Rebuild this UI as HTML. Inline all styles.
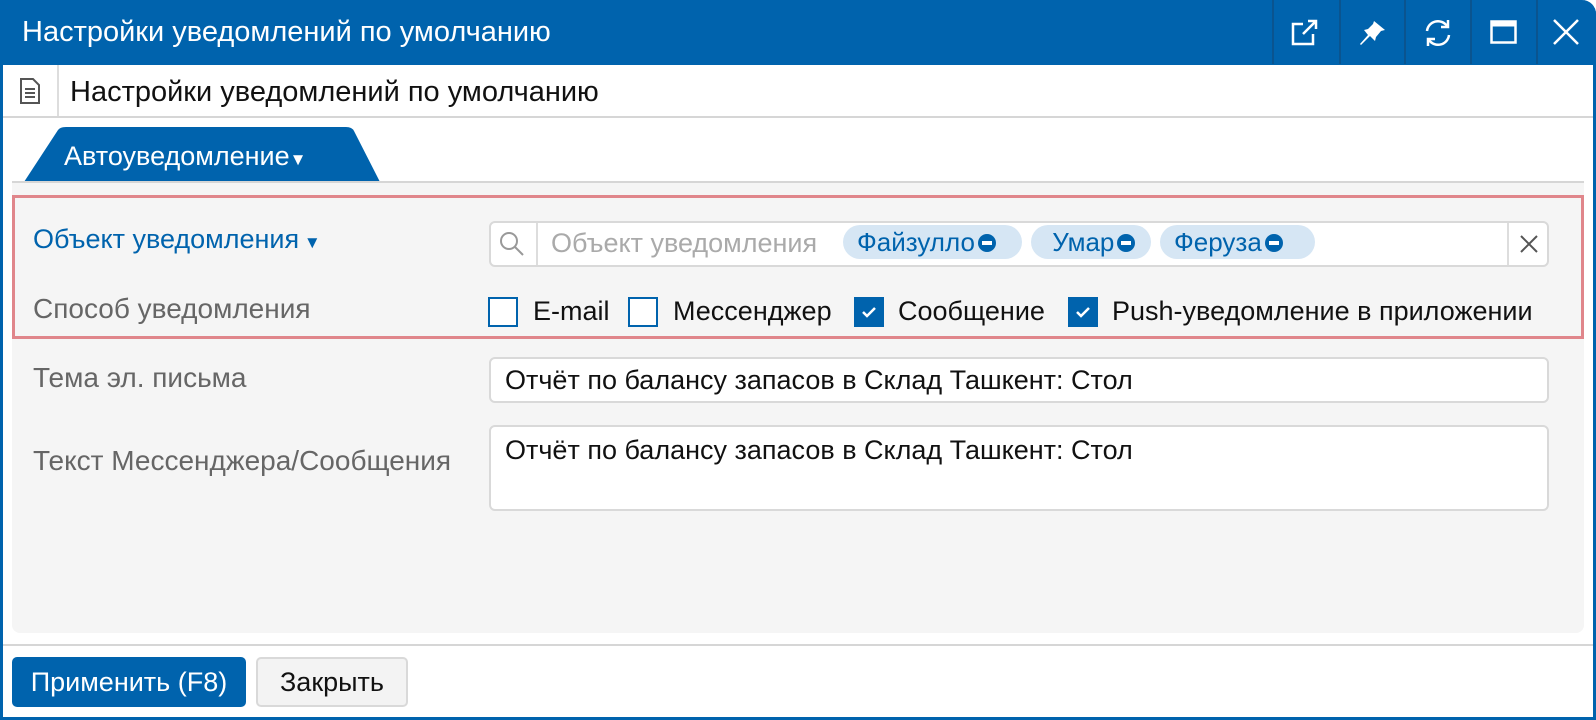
<!DOCTYPE html>
<html><head><meta charset="utf-8"><style>
*{box-sizing:border-box;margin:0;padding:0}
body{width:1596px;height:720px;overflow:hidden;background:#fff;font-family:"Liberation Sans","DejaVu Sans",sans-serif;position:relative}
.a{position:absolute;white-space:nowrap}
.win{left:0;top:0;width:1596px;height:720px;border:3px solid #0063ad;border-top:none;border-radius:0 14px 0 0;background:#fff}
.title{left:0;top:0;width:1596px;height:65px;background:#0063ad;border-radius:0 14px 0 0;color:#fff;font-size:29px;line-height:65px;padding-left:22px}
.sep{top:0;width:2px;height:64px;background:#0a548f}
.lbl{font-size:28px;color:#666}
.inp{background:#fff;border:2px solid #d9d9d9;border-radius:6px;font-size:27px;color:#111}
.cb{width:30px;height:30px;border:2px solid #0063ad;background:#fff}
.cb.on{background:#0063ad}
.ct{font-size:27px;color:#111}
.chip{height:34px;top:225px;background:#d6e6f4;border-radius:17px;color:#0063ad;font-size:26px;line-height:34px;padding-left:14px}
.min{display:inline-block;width:18px;height:18px;border-radius:50%;background:#0063ad;vertical-align:-1px;position:relative;margin-left:3px}
.min:after{content:"";position:absolute;left:4px;top:7px;width:10px;height:4px;background:#fff}
</style></head><body>
<div class="a win"></div>
<div class="a title">Настройки уведомлений по умолчанию</div>
<div class="a sep" style="left:1272px"></div><div class="a sep" style="left:1339px"></div><div class="a sep" style="left:1404px"></div><div class="a sep" style="left:1470px"></div><div class="a sep" style="left:1536px"></div>
<svg class="a" style="left:1290px;top:19px" width="34" height="28" viewBox="0 0 34 28" fill="none" stroke="#fff" stroke-width="2.5"><path d="M13 5H3V25H23V15"/><path d="M13 15L26 2M18 2H26V10"/></svg>
<svg class="a" style="left:1358px;top:19px" width="30" height="28" viewBox="0 0 30 28" fill="#fff"><path d="M16 2L27 11L23 12L18 18L17 22L12 17L3 26L2 25L10 16L6 11L10 10L15 5Z"/></svg>
<svg class="a" style="left:1422px;top:18px" width="32" height="30" viewBox="0 0 32 30" fill="none" stroke="#fff" stroke-width="2.5"><path d="M5 13A11 11 0 0 1 25 8"/><path d="M27 17A11 11 0 0 1 7 22"/><path d="M26 2V9H19" /><path d="M6 28V21H13"/></svg>
<svg class="a" style="left:1490px;top:20px" width="28" height="24" viewBox="0 0 28 24" fill="none" stroke="#fff" stroke-width="2.5"><rect x="1.5" y="1.5" width="24" height="21"/><path d="M1.5 4H25.5" stroke-width="5"/></svg>
<svg class="a" style="left:1553px;top:19px" width="26" height="26" viewBox="0 0 26 26" stroke="#fff" stroke-width="2.5"><path d="M1 1L25 25M25 1L1 25"/></svg>
<svg class="a" style="left:19px;top:78px" width="22" height="26" viewBox="0 0 22 26" fill="none" stroke="#555" stroke-width="2"><path d="M2 1H14L20 7V25H2Z"/><path d="M6 11H16M6 15H16M6 19H16"/></svg>
<div class="a" style="left:57px;top:65px;width:2px;height:52px;background:#ddd"></div>
<div class="a" style="left:70px;top:65px;font-size:29px;line-height:54px;color:#111">Настройки уведомлений по умолчанию</div>
<div class="a" style="left:3px;top:116px;width:1590px;height:2px;background:#d6d6d6"></div>
<svg class="a" style="left:22px;top:127px" width="362" height="56" viewBox="0 0 362 56"><path d="M2 55L36 3Q38 0 44 0H324Q330 0 332 4L358 55Z" fill="#0063ad"/></svg>
<div class="a" style="left:64px;top:129px;line-height:54px;color:#fff;font-size:27px">Автоуведомление<span style="font-size:17px">▼</span></div>
<div class="a" style="left:12px;top:181px;width:1572px;height:2px;background:#d6d6d6"></div>
<div class="a" style="left:12px;top:183px;width:1572px;height:450px;background:#f5f5f5;border-radius:0 0 8px 8px"></div>
<div class="a" style="left:12px;top:195px;width:1572px;height:144px;border:3px solid #e0868b"></div>
<div class="a" style="left:33px;top:224px;font-size:27px;color:#0063ad">Объект уведомления<span style="font-size:17px"> ▼</span></div>
<div class="a lbl" style="left:33px;top:293px">Способ уведомления</div>
<div class="a lbl" style="left:33px;top:362px">Тема эл. письма</div>
<div class="a lbl" style="left:33px;top:445px">Текст Мессенджера/Сообщения</div>
<div class="a inp" style="left:489px;top:221px;width:1060px;height:46px"></div>
<div class="a" style="left:536px;top:223px;width:2px;height:42px;background:#ddd"></div>
<div class="a" style="left:1507px;top:223px;width:2px;height:42px;background:#ddd"></div>
<svg class="a" style="left:499px;top:231px" width="26" height="26" viewBox="0 0 26 26" fill="none" stroke="#999" stroke-width="2"><circle cx="10" cy="10" r="8"/><path d="M16 16L24 24"/></svg>
<svg class="a" style="left:1520px;top:235px" width="18" height="18" viewBox="0 0 18 18" stroke="#555" stroke-width="2"><path d="M1 1L17 17M17 1L1 17"/></svg>
<div class="a" style="left:551px;top:226px;font-size:27px;line-height:34px;color:#aaa">Объект уведомления</div>
<div class="a chip" style="left:843px;width:179px">Файзулло<span class="min"></span></div>
<div class="a chip" style="left:1031px;width:120px">&nbsp;Умар<span class="min"></span></div>
<div class="a chip" style="left:1160px;width:155px">Феруза<span class="min"></span></div>
<div class="a cb" style="left:488px;top:297px"></div><div class="a ct" style="left:533px;top:296px">E-mail</div>
<div class="a cb" style="left:628px;top:297px"></div><div class="a ct" style="left:673px;top:296px">Мессенджер</div>
<div class="a cb on" style="left:854px;top:297px"><svg width="26" height="26" viewBox="0 0 26 26" fill="none" stroke="#fff" stroke-width="2.5"><path d="M7 13L11 17L19 9"/></svg></div><div class="a ct" style="left:898px;top:296px">Сообщение</div>
<div class="a cb on" style="left:1068px;top:297px"><svg width="26" height="26" viewBox="0 0 26 26" fill="none" stroke="#fff" stroke-width="2.5"><path d="M7 13L11 17L19 9"/></svg></div><div class="a ct" style="left:1112px;top:296px">Push-уведомление в приложении</div>
<div class="a inp" style="left:489px;top:357px;width:1060px;height:46px;padding:6px 14px">Отчёт по балансу запасов в Склад Ташкент: Стол</div>
<div class="a inp" style="left:489px;top:425px;width:1060px;height:86px;padding:8px 14px">Отчёт по балансу запасов в Склад Ташкент: Стол</div>
<div class="a" style="left:3px;top:644px;width:1590px;height:2px;background:#d6d6d6"></div>
<div class="a" style="left:12px;top:657px;width:234px;height:50px;background:#0063ad;border-radius:5px;color:#fff;font-size:27px;line-height:50px;text-align:center">Применить (F8)</div>
<div class="a" style="left:256px;top:657px;width:152px;height:50px;background:#f3f3f3;border:2px solid #d9d9d9;border-radius:5px;color:#111;font-size:27px;line-height:46px;text-align:center">Закрыть</div>
</body></html>
